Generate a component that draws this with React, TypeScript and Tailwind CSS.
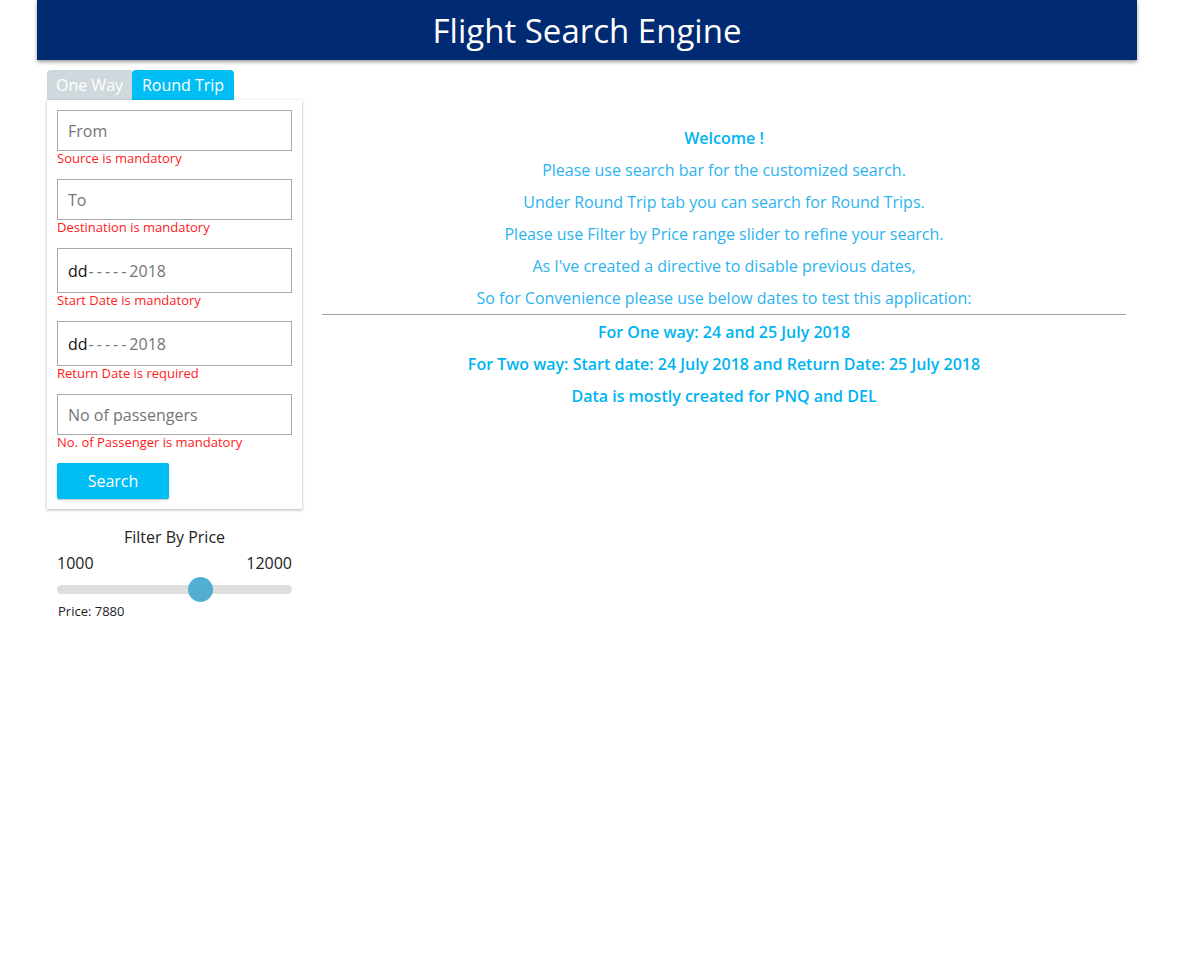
import React from "react";

const font = { fontFamily: '"Open Sans", "Noto Sans", sans-serif' };

function Field({ placeholder, error, tall }: { placeholder: React.ReactNode; error: string; tall?: boolean }) {
  return (
    <div className="flex flex-col">
      <div
        className={`border border-[#a9a9a9] w-[235px] flex items-center pl-[10px] text-[16px] text-[#757575] ${tall ? "h-[45px]" : "h-[41px]"}`}
      >
        {placeholder}
      </div>
      <div className="text-[13px] leading-[15px] text-[#ff1a1a]">{error}</div>
    </div>
  );
}

function DateText() {
  return (
    <span>
      <span className="text-[#111]">dd</span>
      <span className="text-[#757575] tracking-[3px] pl-[1px]">-----</span>
      <span className="text-[#757575]">2018</span>
    </span>
  );
}

export default function App() {
  return (
    <div className="min-h-[958px] bg-white" style={font}>
      <div className="ml-[37px] w-[1100px]">
        <div className="h-[60px] bg-[#002a72] flex items-center justify-center shadow-[0_2px_4px_rgba(0,0,0,0.4)]">
          <h1 className="text-white text-[33px] leading-none">Flight Search Engine</h1>
        </div>
        <div className="flex pt-[10px]">
          <div className="ml-[10px] w-[255px] flex flex-col">
            <div className="flex h-[30px]">
              <div className="w-[85px] bg-[#cfd8dc] text-white text-[16px] flex items-center justify-center rounded-tl-[4px]">One Way</div>
              <div className="w-[102px] bg-[#00bdf3] text-white text-[16px] flex items-center justify-center rounded-t-[4px]">Round Trip</div>
            </div>
            <div className="shadow-[0_1px_3px_rgba(0,0,0,0.3)] bg-white px-[10px] pt-[10px] pb-[10px] flex flex-col gap-[13px]">
              <Field placeholder="From" error="Source is mandatory" />
              <Field placeholder="To" error="Destination is mandatory" />
              <Field placeholder={<DateText />} error="Start Date is mandatory" tall />
              <Field placeholder={<DateText />} error="Return Date is required" tall />
              <Field placeholder="No of passengers" error="No. of Passenger is mandatory" />
              <div>
                <button className="w-[112px] h-[36px] bg-[#00bdf3] text-white text-[16px] rounded-[2px] shadow-[0_1px_2px_rgba(0,0,0,0.25)]">
                  Search
                </button>
              </div>
            </div>
            <div className="px-[10px] pt-[17px] flex flex-col">
              <div className="text-center text-[16px] text-[#222] leading-[22px]">Filter By Price</div>
              <div className="flex justify-between text-[16px] text-[#222] leading-[22px] mt-[4px]">
                <span>1000</span>
                <span>12000</span>
              </div>
              <div className="relative h-[9px] rounded-full bg-[#dedede] mt-[11px]">
                <div className="absolute left-[131px] top-[-8px] w-[25px] h-[25px] rounded-full bg-[#52afd1]" />
              </div>
              <div className="text-[13px] text-[#222] mt-[8px] pl-[1px]">Price: 7880</div>
            </div>
          </div>
          <div className="ml-[20px] w-[804px] pt-[52px] flex flex-col items-center text-[16px] leading-[32px] text-[#2db3ee]">
            <div className="font-semibold text-[#00b4f0]">Welcome !</div>
            <div>Please use search bar for the customized search.</div>
            <div>Under Round Trip tab you can search for Round Trips.</div>
            <div>Please use Filter by Price range slider to refine your search.</div>
            <div>As I've created a directive to disable previous dates,</div>
            <div>So for Convenience please use below dates to test this application:</div>
            <div className="w-full h-px bg-[#9e9e9e] mb-[1px]" />
            <div className="font-semibold text-[#00b4f0]">For One way: 24 and 25 July 2018</div>
            <div className="font-semibold text-[#00b4f0]">For Two way: Start date: 24 July 2018 and Return Date: 25 July 2018</div>
            <div className="font-semibold text-[#00b4f0]">Data is mostly created for PNQ and DEL</div>
          </div>
        </div>
      </div>
    </div>
  );
}
